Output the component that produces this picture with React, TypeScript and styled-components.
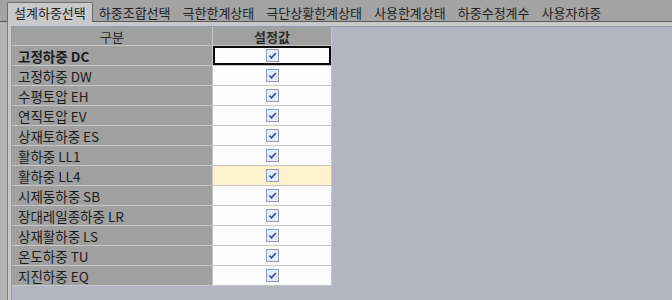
import React from 'react';
import styled, { createGlobalStyle } from 'styled-components';

const Global = createGlobalStyle`
  html, body { margin: 0; padding: 0; }
  body {
    width: 672px;
    height: 300px;
    overflow: hidden;
    background: #a3a3a3;
    font-family: "Noto Sans CJK KR", "Noto Sans", sans-serif;
    font-size: 12px;
    color: #1e1e1e;
  }
`;

const Frame = styled.div`
  width: 672px;
  height: 300px;
  display: flex;
  flex-direction: column;
`;

const TabStrip = styled.div`
  height: 22px;
  display: flex;
  align-items: flex-end;
  padding-left: 7px;
  box-sizing: border-box;
  border-bottom: 1px solid #5a5a5a;
  background: #a3a3a3;
`;

const Tab = styled.div<{ $active?: boolean }>`
  height: ${p => (p.$active ? 20 : 18)}px;
  padding: 0 6px;
  display: flex;
  align-items: center;
  font-size: 13px;
  line-height: 1;
  color: #222;
  box-sizing: border-box;
  background: ${p => (p.$active ? '#c9c9c9' : 'transparent')};
  border: ${p => (p.$active ? '1px solid #6e6e6e' : 'none')};
  border-bottom: none;
  border-radius: ${p => (p.$active ? '2px 2px 0 0' : '0')};
  margin-bottom: ${p => (p.$active ? '-1px' : '0')};
`;

const Body = styled.div`
  flex: 1;
  display: flex;
  background: #b2b2b2;
  padding-left: 7px;
`;

const Panel = styled.div`
  flex: 1;
  display: flex;
  border-left: 1px solid #7c7c7c;
  background: #c9c9c9;
  padding: 4px 0 0 3px;
`;

const Grid = styled.div`
  flex: 1;
  background: #b3b6c0;
  border-left: 1px solid #8f9bb0;
  border-top: 1px solid #8f9bb0;
  display: flex;
  flex-direction: column;
  align-items: flex-start;
`;

const Row = styled.div`
  display: grid;
  grid-template-columns: 200px 118px;
  column-gap: 1px;
  background: #c6c6c6;
  border-bottom: 1px solid #c6c6c6;
  border-right: 1px solid #c6c6c6;
`;

const HeadCell = styled.div`
  height: 18px;
  background: #a0a0a0;
  display: flex;
  align-items: center;
  justify-content: center;
  font-size: 13px;
  color: #2a2a2a;
`;

const HeadBold = styled(HeadCell)`
  font-weight: 700;
`;

const NameCell = styled.div<{ $bold?: boolean }>`
  height: 19px;
  background: #a0a0a0;
  display: flex;
  align-items: center;
  padding-left: 6px;
  font-size: 13.5px;
  font-weight: ${p => (p.$bold ? 700 : 400)};
  color: #1c1c1c;
`;

const ValueCell = styled.div<{ $selected?: boolean; $hover?: boolean }>`
  height: 19px;
  box-sizing: border-box;
  background: ${p => (p.$hover ? '#fff3cd' : '#fdfcff')};
  border: ${p => (p.$selected ? '2px solid #0a0a0a' : 'none')};
  display: flex;
  align-items: center;
  justify-content: center;
`;

const Check = styled.span`
  width: 11px;
  height: 11px;
  border: 1px solid #8f9bb3;
  background: #e4ecf7;
  display: inline-flex;
  align-items: center;
  justify-content: center;
`;

const loads = [
  '고정하중 DC',
  '고정하중 DW',
  '수평토압 EH',
  '연직토압 EV',
  '상재토하중 ES',
  '활하중 LL1',
  '활하중 LL4',
  '시제동하중 SB',
  '장대레일종하중 LR',
  '상재활하중 LS',
  '온도하중 TU',
  '지진하중 EQ',
];

const tabs = ['설계하중선택', '하중조합선택', '극한한계상태', '극단상황한계상태', '사용한계상태', '하중수정계수', '사용자하중'];

function CheckMark() {
  return (
    <Check>
      <svg width="9" height="9" viewBox="0 0 9 9">
        <path d="M1.5 4.5 L3.5 6.8 L7.8 2" fill="none" stroke="#3b58a0" strokeWidth="1.8" />
      </svg>
    </Check>
  );
}

export default function App() {
  return (
    <>
      <Global />
      <Frame>
        <TabStrip>
          {tabs.map((t, i) => (
            <Tab key={t} $active={i === 0}>{t}</Tab>
          ))}
        </TabStrip>
        <Body>
          <Panel>
            <Grid>
              <Row>
                <HeadCell>구분</HeadCell>
                <HeadBold>설정값</HeadBold>
              </Row>
              {loads.map((name, i) => (
                <Row key={name}>
                  <NameCell $bold={i === 0}>{name}</NameCell>
                  <ValueCell $selected={i === 0} $hover={i === 6}>
                    <CheckMark />
                  </ValueCell>
                </Row>
              ))}
            </Grid>
          </Panel>
        </Body>
      </Frame>
    </>
  );
}
